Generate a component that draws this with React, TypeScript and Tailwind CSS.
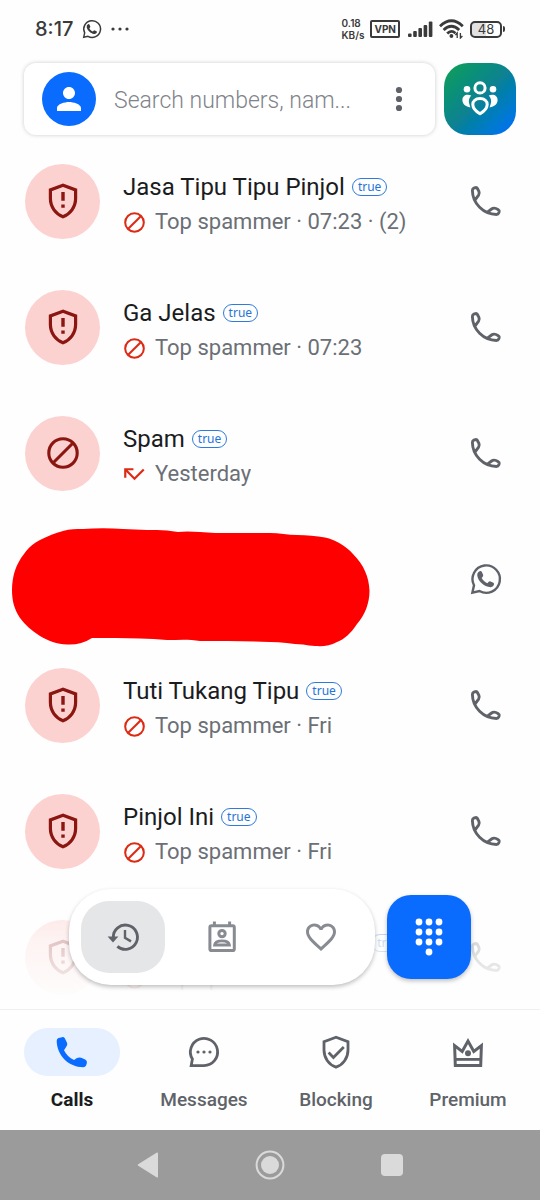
import React, { useState } from 'react';

type AvatarKind = 'shield' | 'block';
type StatusKind = 'blocked' | 'missed';

interface CallEntry {
  id: number;
  name: string;
  details: string;
  avatar: AvatarKind;
  status: StatusKind;
}

interface IconProps {
  className?: string;
}

const CALLS: (CallEntry | null)[] = [
  { id: 1, name: 'Jasa Tipu Tipu Pinjol', details: 'Top spammer · 07:23 · (2)', avatar: 'shield', status: 'blocked' },
  { id: 2, name: 'Ga Jelas', details: 'Top spammer · 07:23', avatar: 'shield', status: 'blocked' },
  { id: 3, name: 'Spam', details: 'Yesterday', avatar: 'block', status: 'missed' },
  null, // hidden contact
  { id: 5, name: 'Tuti Tukang Tipu', details: 'Top spammer · Fri', avatar: 'shield', status: 'blocked' },
  { id: 6, name: 'Pinjol Ini', details: 'Top spammer · Fri', avatar: 'shield', status: 'blocked' },
  { id: 7, name: 'Penipu Pinjaman Uang', details: 'Top spammer', avatar: 'shield', status: 'blocked' },
];

const PersonIcon = ({ className }: IconProps) => (
  <svg viewBox="0 0 24 24" fill="currentColor" className={className} aria-hidden="true">
    <path d="M12 12c2.21 0 4-1.79 4-4s-1.79-4-4-4-4 1.79-4 4 1.79 4 4 4zm0 2c-2.67 0-8 1.34-8 4v2h16v-2c0-2.66-5.33-4-8-4z" />
  </svg>
);

const PhoneOutlineIcon = ({ className }: IconProps) => (
  <svg viewBox="0 0 36 36" fill="none" stroke="currentColor" strokeWidth="2.9" strokeLinejoin="round" className={className} aria-hidden="true">
    <path d="M7.3 16.6L10.6 12.1Q11.7 10.2 10.9 8.4L9.4 5.5Q8.8 4.3 7.4 4.6L5.8 5.2Q4.4 5.8 4.4 7.6C4.5 20.4 15.5 31.4 28.4 31.5Q30.2 31.5 30.7 30.1L31.2 28.6Q31.5 27.4 30.3 26.7C27.6 24.9 25.4 24.6 23.6 26L19.4 29.2" />
  </svg>
);

const PhoneFilledIcon = ({ className }: IconProps) => (
  <svg viewBox="0 0 36 36" fill="currentColor" className={className} aria-hidden="true">
    <path d="M8 3.2Q9.8 2.7 10.8 4.2L13 8.8Q13.7 10.5 12.7 12L10 16.2C12 20.4 15.6 24 20 26.1L23 24.1Q25 22.9 27.2 23.7L31.2 25.6Q33.4 26.9 32.9 29L32.1 31.5Q31.3 33.3 29.2 33.3C14.6 33.2 2.8 21.4 2.7 6.8Q2.7 4.7 4.6 4.1Z" />
  </svg>
);

const WhatsappIcon = ({ className }: IconProps) => (
  <svg viewBox="0 0 36 36" className={className} aria-hidden="true">
    <path d="M4.4 31.6L6 24.3A13.7 13.7 0 1 1 11.4 30Z" fill="none" stroke="currentColor" strokeWidth="2.4" strokeLinejoin="miter" />
    <path d="M11.6 10.2Q13.2 9.5 13.9 10.9L15.1 13.7Q15.5 14.8 14.7 15.7L13.7 17C15.1 19.4 16.8 21 19.3 22.2L20.7 20.7Q21.5 19.9 22.6 20.4L25.4 21.8Q26.3 22.4 26 23.5C25.3 25.6 23.4 26.5 21.3 26.1C15.6 25.2 10.2 20 9.3 14.7Q8.9 11.6 11.6 10.2Z" fill="currentColor" />
  </svg>
);

const ShieldAlertIcon = ({ className }: IconProps) => (
  <svg viewBox="0 0 40 40" className={className} aria-hidden="true">
    <path d="M20 4.2L7.4 8.9V17.6C7.4 26 12.8 33.2 20 35.7C27.2 33.2 32.6 26 32.6 17.6V8.9Z" fill="none" stroke="currentColor" strokeWidth="3.2" />
    <path d="M18.3 11h3.4v8.8h-3.4zM18.3 23.4h3.4v3.4h-3.4z" fill="currentColor" />
  </svg>
);

const ShieldCheckIcon = ({ className }: IconProps) => (
  <svg viewBox="0 0 36 36" fill="none" stroke="currentColor" strokeWidth="2.8" className={className} aria-hidden="true">
    <path d="M18 3.3L6 7.8V16C6 24 11 31 18 33.2C25 31 30 24 30 16V7.8Z" />
    <path d="M10.6 18.6L15.4 23.4L25.8 13" />
  </svg>
);

const BlockIcon = ({ className }: IconProps) => (
  <svg viewBox="0 0 32 32" fill="none" stroke="currentColor" strokeWidth="3.1" className={className} aria-hidden="true">
    <circle cx="16" cy="16" r="14.2" />
    <path d="M6 26L26 6" />
  </svg>
);

const MissedIcon = ({ className }: IconProps) => (
  <svg viewBox="0 0 20 20" fill="none" stroke="currentColor" strokeWidth="2.1" className={className} aria-hidden="true">
    <path d="M1.2 13V5H9M1.6 5.4L10 14L18.8 5.2" />
  </svg>
);

const CommunityIcon = ({ className }: IconProps) => (
  <svg viewBox="0 0 36 36" className={className} aria-hidden="true">
    <circle cx="18" cy="6.9" r="5.1" fill="none" stroke="currentColor" strokeWidth="3" />
    <circle cx="5" cy="8.2" r="3.3" fill="currentColor" />
    <circle cx="31" cy="8.2" r="3.3" fill="currentColor" />
    <path d="M9.2 14.4C7 16.8 6.3 19.8 7.2 22.6Q7.8 24.8 8.4 26.4C3.6 25.7 0.4 23 0.4 19C0.4 15 4 12.7 9.2 14.4Z" fill="currentColor" />
    <path d="M26.8 14.4C29 16.8 29.7 19.8 28.8 22.6Q28.2 24.8 27.6 26.4C32.4 25.7 35.6 23 35.6 19C35.6 15 32 12.7 26.8 14.4Z" fill="currentColor" />
    <path d="M18 17.6C13.4 17.6 10.6 20.2 10.8 23.6C11 27.6 14.4 30.6 18 32.8C21.6 30.6 25 27.6 25.2 23.6C25.4 20.2 22.6 17.6 18 17.6Z" fill="none" stroke="currentColor" strokeWidth="3" strokeLinejoin="round" />
  </svg>
);

const HistoryIcon = ({ className }: IconProps) => (
  <svg viewBox="0 0 36 36" className={className} aria-hidden="true">
    <path d="M8.3 18.6A12.1 12.1 0 1 1 12.4 27.3" fill="none" stroke="currentColor" strokeWidth="2.9" />
    <path d="M2.6 17.4H13.4L8 23.4Z" fill="currentColor" />
    <path d="M20 11V18.8L26 22.4" fill="none" stroke="currentColor" strokeWidth="2.4" />
  </svg>
);

const ContactsIcon = ({ className }: IconProps) => (
  <svg viewBox="0 0 36 36" fill="none" stroke="currentColor" className={className} aria-hidden="true">
    <rect x="5.9" y="6.8" width="24.4" height="24.8" rx="1.6" strokeWidth="3" />
    <path d="M10.4 2.6V7M25.6 2.6V7" strokeWidth="3" />
    <circle cx="18" cy="14.6" r="3.2" strokeWidth="3" />
    <path d="M10.6 26C11 22.8 14.4 21.8 18 21.8C21.600 21.8 25 22.8 25.4 26Z" strokeWidth="2.8" />
  </svg>
);

const HeartIcon = ({ className }: IconProps) => (
  <svg viewBox="0 0 24 24" fill="currentColor" className={className} aria-hidden="true">
    <path d="M16.5 3c-1.74 0-3.41.81-4.5 2.09C10.91 3.81 9.24 3 7.5 3 4.42 3 2 5.42 2 8.5c0 3.78 3.4 6.86 8.55 11.54L12 21.35l1.45-1.32C18.6 15.36 22 12.28 22 8.5 22 5.42 19.58 3 16.5 3zm-4.4 15.55l-.1.1-.1-.1C7.14 14.24 4 11.39 4 8.5 4 6.5 5.5 5 7.5 5c1.54 0 3.04.99 3.57 2.36h1.87C13.46 5.99 14.96 5 16.5 5c2 0 3.5 1.5 3.5 3.5 0 2.89-3.14 5.74-7.9 10.05z" />
  </svg>
);

const DialpadIcon = ({ className }: IconProps) => (
  <svg viewBox="0 0 28 38" fill="currentColor" className={className} aria-hidden="true">
    {[4, 14, 24].map(y => [4, 14, 24].map(x => <circle key={`${x}-${y}`} cx={x} cy={y} r="3.4" />))}
    <circle cx="14" cy="34" r="3.4" />
  </svg>
);

const MessageIcon = ({ className }: IconProps) => (
  <svg viewBox="0 0 36 36" className={className} aria-hidden="true">
    <path d="M5.2 31.6H18A13.6 13.6 0 1 0 6.4 25.1Z" fill="none" stroke="currentColor" strokeWidth="2.8" />
    <circle cx="12" cy="18" r="1.6" fill="currentColor" />
    <circle cx="18" cy="18" r="1.6" fill="currentColor" />
    <circle cx="24" cy="18" r="1.6" fill="currentColor" />
  </svg>
);

const CrownIcon = ({ className }: IconProps) => (
  <svg viewBox="0 0 36 36" className={className} aria-hidden="true">
    <path d="M5.3 31.4L4.6 11.6L12.200 17.400L18 7L23.800 17.400L31.4 11.6L30.7 31.400Z" fill="none" stroke="currentColor" strokeWidth="3" />
    <path d="M5 25.4H31" stroke="currentColor" strokeWidth="2.8" />
    <circle cx="18" cy="19.2" r="3" fill="currentColor" />
  </svg>
);

const StatusBar = () => (
  <div className="flex h-[58px] shrink-0 items-center justify-between px-[35px] text-[#3a3a3a]">
    <div className="flex items-center gap-2">
      <span className="font-['Inter',sans-serif] text-[20px] leading-6 font-medium">8:17</span>
      <WhatsappIcon className="size-[22px]" />
      <svg viewBox="0 0 18 4" fill="currentColor" className="h-1 w-[18px]" aria-hidden="true">
        <circle cx="2" cy="2" r="1.6" />
        <circle cx="9" cy="2" r="1.6" />
        <circle cx="16" cy="2" r="1.6" />
      </svg>
    </div>
    <div className="flex items-center gap-1.5">
      <div className="font-['Inter',sans-serif] text-[10px] leading-3 font-semibold">
        <div>0.18</div>
        <div>KB/s</div>
      </div>
      <span className="rounded-xs border-2 border-current px-[2px] font-['Inter',sans-serif] text-[10px] leading-[14px] font-bold">VPN</span>
      <svg viewBox="0 0 25 17" fill="currentColor" className="ml-0.5 h-[17px] w-[25px]" aria-hidden="true">
        <rect x="0" y="12.6" width="3.6" height="3.4" rx="1" />
        <rect x="5.2" y="10" width="3.6" height="6" rx="1" />
        <rect x="10.4" y="7" width="3.6" height="9" rx="1" />
        <rect x="15.6" y="4" width="3.6" height="12" rx="1" />
        <rect x="20.8" y="0.6" width="3.6" height="15.4" rx="1" />
      </svg>
      <svg viewBox="0 0 25 20" fill="none" stroke="currentColor" strokeWidth="2.8" className="h-5 w-[25px]" aria-hidden="true">
        <path d="M1 7.2Q12.4 -3.6 23.8 7.2" />
        <path d="M4.6 11Q12.4 3.6 20.2 11" />
        <path d="M8.2 14.4Q12.4 10.4 16.4 14.2" />
        <circle cx="12.4" cy="17" r="1.9" fill="currentColor" stroke="none" />
        <path d="M18.2 19V14L16.4 16M21.4 14V19L23.4 17" strokeWidth="1.3" />
      </svg>
      <div className="flex items-center gap-px">
        <span className="w-8 rounded-[5px] border-2 border-current bg-linear-to-r from-[#e2e2e2] from-50% to-white to-50% text-center font-['Inter',sans-serif] text-[13px] leading-[13px]">48</span>
        <span className="h-1.5 w-0.5 rounded-r bg-current" />
      </div>
    </div>
  </div>
);

const CallRow = ({ call }: { call: CallEntry }) => (
  <li className="flex h-[126px] shrink-0 items-center pr-9 pl-[25px]">
    <div className="flex size-[75px] shrink-0 items-center justify-center rounded-full bg-[#fbd2cf] text-[#8b1510]">
      {call.avatar === 'shield' ? <ShieldAlertIcon className="size-10" /> : <BlockIcon className="size-8" />}
    </div>
    <div className="ml-[23px] min-w-0 flex-1 pt-1.5">
      <div className="flex items-center gap-[7px]">
        <span className="truncate text-[24px] leading-9 text-[#1b1c1e]">{call.name}</span>
        <span className="shrink-0 rounded-full border border-[#2f7bdc] px-[5px] font-['Noto_Sans',sans-serif] text-[12px] leading-4 text-[#2474d8]">true</span>
      </div>
      <div className="flex items-center gap-2.5">
        {call.status === 'blocked' ? <BlockIcon className="ml-px size-[21px] text-[#dd2a14]" /> : <MissedIcon className="ml-px size-[21px] text-[#dd2a14]" />}
        <span className="truncate text-[22px] leading-[34px] text-[#6b6f76]">{call.details}</span>
      </div>
    </div>
    <button type="button" aria-label={`Call ${call.name}`} className="text-[#5f6369]">
      <PhoneOutlineIcon className="size-9" />
    </button>
  </li>
);

const HiddenRow = () => (
  <li className="flex h-[126px] shrink-0 items-center justify-between pr-9 pl-3">
    <svg viewBox="0 0 358 119" className="mt-4 h-[119px] w-[358px]" aria-hidden="true">
      <path d="M0 62C0 48 4 36 12 26C17 19 22 15 28 12C36 8 43 5 51 3C58 1 64 1 71 1C84 0 98 0 111 1C119 1 127 2 135 2C142 2 148 2 155 2.500L166 4C173 3 181 3.500 188 4C193 4 198 5 203 5H258C267 5 276 7 285 7C295 7 304 8 313 9.500C324 12 334 18 341 26C352 37 357 49 357.500 63C357.500 75 353 87 345 96C339 105 333 111 325 114C318 118 311 118.500 303 118C299 118 295 117 291 116.500C280 116 269 114 258 114C234 113 211 113 188 113C177 111 166 112 155 112C146 111 137 111 128 110.500C112 110 96 110 80 110C72 115 64 117 55 116.500C45 116 36 113 28 108C20 103 13 97 8 90C2 81 0 72 0 62Z" fill="#ff0000" />
    </svg>
    <button type="button" aria-label="WhatsApp call" className="text-[#5f6369]">
      <WhatsappIcon className="size-9" />
    </button>
  </li>
);

const FILTERS = [
  { id: 'history', label: 'Recent calls', Icon: HistoryIcon },
  { id: 'contacts', label: 'Contacts', Icon: ContactsIcon },
  { id: 'favorites', label: 'Favorites', Icon: HeartIcon },
];

const TABS = [
  { id: 'calls', label: 'Calls', Icon: PhoneFilledIcon },
  { id: 'messages', label: 'Messages', Icon: MessageIcon },
  { id: 'blocking', label: 'Blocking', Icon: ShieldCheckIcon },
  { id: 'premium', label: 'Premium', Icon: CrownIcon },
];

const App: React.FC = () => {
  const [query, setQuery] = useState('');
  const [filter, setFilter] = useState('history');
  const [tab, setTab] = useState('calls');

  return (
    <div className="flex h-screen flex-col overflow-hidden bg-[#fefefe] font-['Roboto',sans-serif]">
      <StatusBar />

      <header className="flex shrink-0 items-center gap-[9px] px-6 pt-[5px] pb-[3px]">
        <div className="flex h-[72px] min-w-0 flex-1 items-center rounded-xl bg-white px-[18px] shadow-[0_0_4px_rgba(0,0,0,0.2)]">
          <button type="button" aria-label="Profile" className="flex size-[54px] shrink-0 items-center justify-center rounded-full bg-[#0a6cff] text-white">
            <PersonIcon className="size-9" />
          </button>
          <input
            type="text"
            aria-label="Search numbers, names"
            placeholder="Search numbers, nam..."
            value={query}
            onChange={e => setQuery(e.target.value)}
            className="ml-[18px] min-w-0 flex-1 pt-1 text-[23px] leading-8 font-light text-[#1b1c1e] outline-none placeholder:text-[#7f848b]"
          />
          <button type="button" aria-label="More options" className="flex size-9 shrink-0 items-center justify-center text-[#5f6369]">
            <svg viewBox="0 0 8 26" fill="currentColor" className="h-[26px] w-2" aria-hidden="true">
              <circle cx="4" cy="4" r="3.1" />
              <circle cx="4" cy="13" r="3.1" />
              <circle cx="4" cy="22" r="3.1" />
            </svg>
          </button>
        </div>
        <button type="button" aria-label="Community" className="flex size-[72px] shrink-0 items-center justify-center rounded-3xl bg-linear-to-br from-[#14a04f] via-[#0f8192] to-[#0a6cff] text-white">
          <CommunityIcon className="size-9" />
        </button>
      </header>

      <main className="relative min-h-0 flex-1 overflow-hidden">
        <ul className="flex flex-col">
          {CALLS.map((call, i) => (call ? <CallRow key={call.id} call={call} /> : <HiddenRow key={`hidden-${i}`} />))}
        </ul>
        <div className="pointer-events-none absolute inset-x-0 bottom-0 h-[140px] bg-linear-to-b from-transparent via-[#fefefe]/75 to-[#fefefe]" />
        <div className="absolute inset-x-0 bottom-6 flex items-center justify-center gap-3">
          <div className="flex gap-[15px] rounded-[42px] bg-white p-3 shadow-[0_2px_4px_rgba(0,0,0,0.25)]">
            {FILTERS.map(({ id, label, Icon }) => (
              <button
                key={id}
                type="button"
                aria-label={label}
                onClick={() => setFilter(id)}
                className={`flex h-[72px] w-[84px] items-center justify-center rounded-[28px] ${filter === id ? 'bg-[#e5e6e8] text-[#5f6369]' : 'text-[#888c92]'}`}
              >
                <Icon className="size-9" />
              </button>
            ))}
          </div>
          <button type="button" aria-label="Dial pad" className="flex size-[84px] items-center justify-center rounded-3xl bg-[#0a6cff] text-white shadow-[0_2px_4px_rgba(0,0,0,0.25)]">
            <DialpadIcon className="h-[38px] w-7" />
          </button>
        </div>
      </main>

      <nav className="flex h-[121px] shrink-0 border-t border-[#efeff0] px-1.5 pt-[18px]">
        {TABS.map(({ id, label, Icon }) => (
          <button key={id} type="button" onClick={() => setTab(id)} className="flex flex-1 flex-col items-center gap-3">
            <span className={`flex h-12 w-24 items-center justify-center rounded-full ${tab === id ? 'bg-[#e6f0ff] text-[#0a6cff]' : 'text-[#5f6369]'}`}>
              <Icon className="size-9" />
            </span>
            <span className={`text-[19px] leading-6 ${tab === id ? 'font-bold text-[#1b1c1e]' : 'font-medium text-[#5f6369]'}`}>{label}</span>
          </button>
        ))}
      </nav>

      <div className="flex h-[70px] shrink-0 items-center justify-center gap-[78px] bg-[#9b9b9b] text-[#dadada]">
        <button type="button" aria-label="Back" className="flex size-11 items-center justify-center">
          <svg viewBox="0 0 22 26" fill="currentColor" className="h-[26px] w-[22px]" aria-hidden="true">
            <path d="M1.2 12.2L19.5 0.7Q21 0 21 1.6V24.4Q21 26 19.5 25.3L1.2 13.8Q0 13 1.2 12.2Z" />
          </svg>
        </button>
        <button type="button" aria-label="Home" className="flex size-11 items-center justify-center">
          <svg viewBox="0 0 30 30" fill="none" className="size-[30px]" aria-hidden="true">
            <circle cx="15" cy="15" r="13.4" stroke="currentColor" strokeWidth="2" />
            <circle cx="15" cy="15" r="9" fill="currentColor" />
          </svg>
        </button>
        <button type="button" aria-label="Recent apps" className="flex size-11 items-center justify-center">
          <span className="size-[22px] rounded bg-current" />
        </button>
      </div>
    </div>
  );
};

export default App;
